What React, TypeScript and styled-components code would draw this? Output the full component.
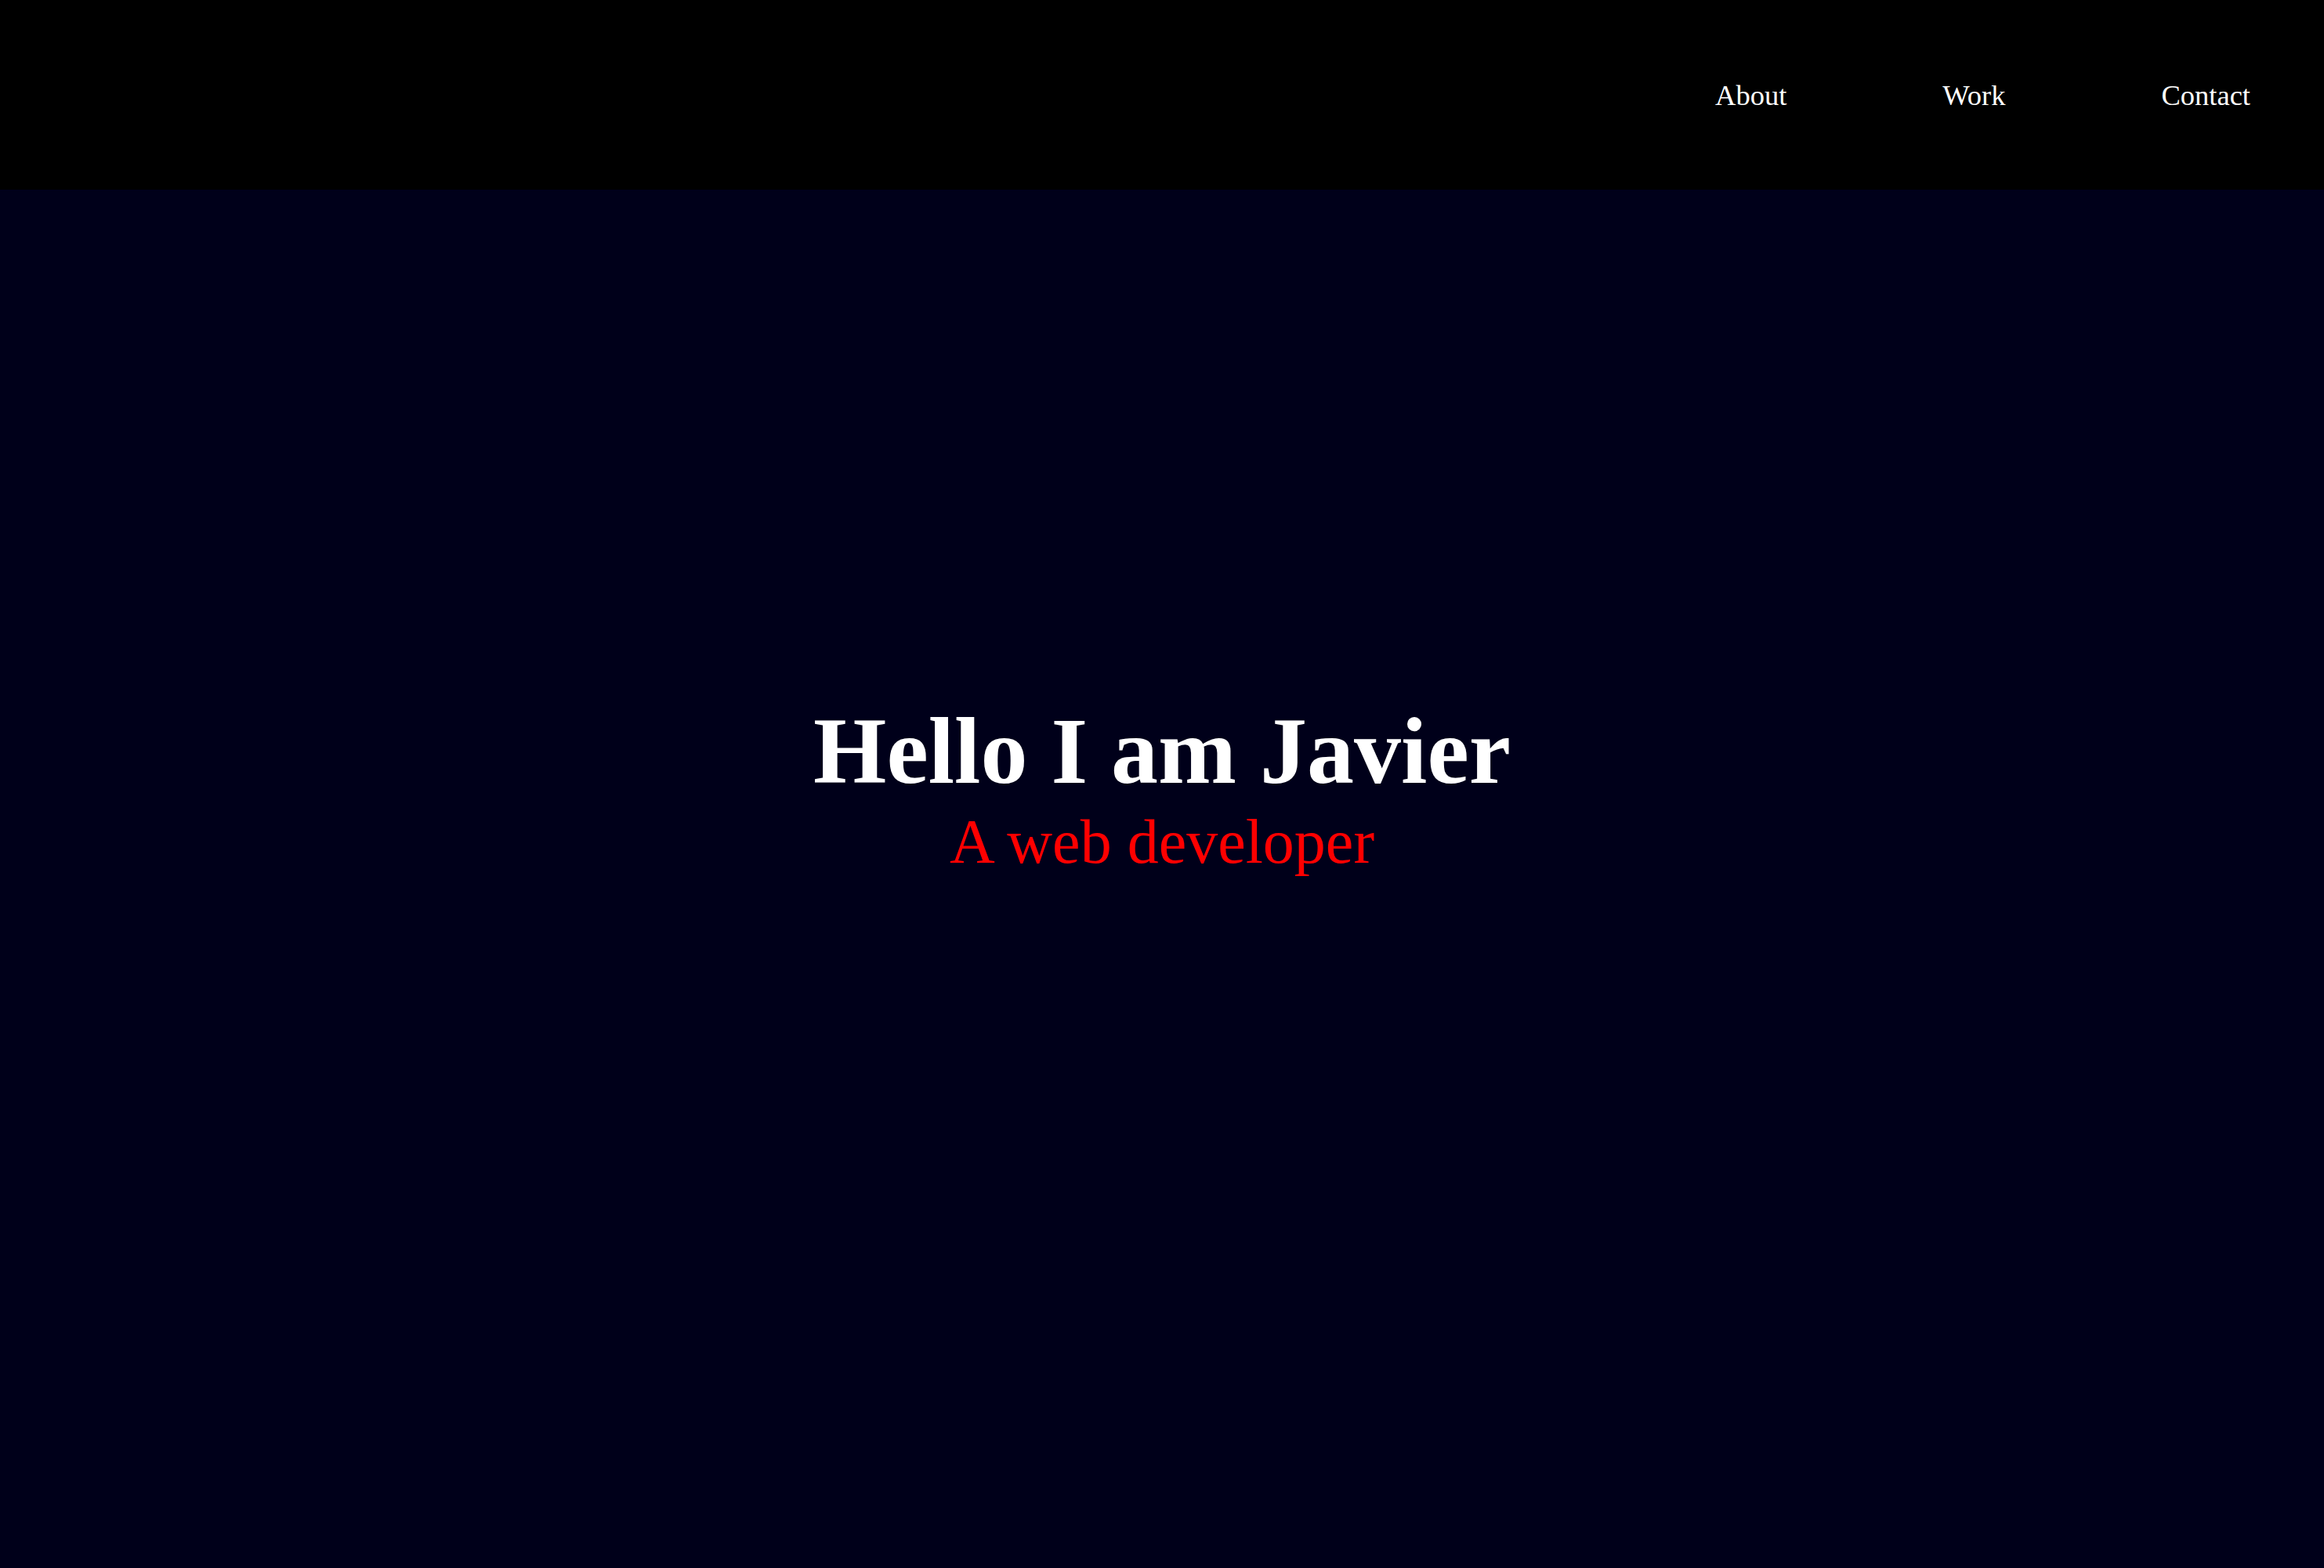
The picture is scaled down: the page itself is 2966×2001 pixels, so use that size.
import React from "react";
import styled, { createGlobalStyle } from "styled-components";

const GlobalStyle = createGlobalStyle`
  html, body {
    margin: 0;
    padding: 0;
    background: #00001a;
  }
  body {
    font-family: "Liberation Serif", "Times New Roman", serif;
  }
  * { box-sizing: border-box; }
`;

const Page = styled.div`
  display: flex;
  flex-direction: column;
  min-height: 100vh;
  background: #00001a;
`;

const Header = styled.header`
  height: 242px;
  background: #000000;
  display: flex;
  align-items: center;
  justify-content: flex-end;
  padding-right: 94px;
`;

const Nav = styled.nav`
  display: flex;
  align-items: center;
  gap: 199px;
`;

const NavLink = styled.a`
  color: #ffffff;
  font-size: 36.5px;
  text-decoration: none;
  cursor: pointer;
`;

const Hero = styled.main`
  flex: 1;
  display: flex;
  flex-direction: column;
  align-items: center;
  justify-content: center;
  padding-bottom: 234px;
`;

const Title = styled.h1`
  margin: 0;
  color: #ffffff;
  font-size: 120px;
  font-weight: bold;
  line-height: 1.15;
`;

const Subtitle = styled.h2`
  margin: 0;
  color: #ff0000;
  font-size: 80px;
  font-weight: normal;
  line-height: 1.15;
`;

export default function App() {
  return (
    <>
      <GlobalStyle />
      <Page>
        <Header>
          <Nav>
            <NavLink>About</NavLink>
            <NavLink>Work</NavLink>
            <NavLink>Contact</NavLink>
          </Nav>
        </Header>
        <Hero>
          <Title>Hello I am Javier</Title>
          <Subtitle>A web developer</Subtitle>
        </Hero>
      </Page>
    </>
  );
}
